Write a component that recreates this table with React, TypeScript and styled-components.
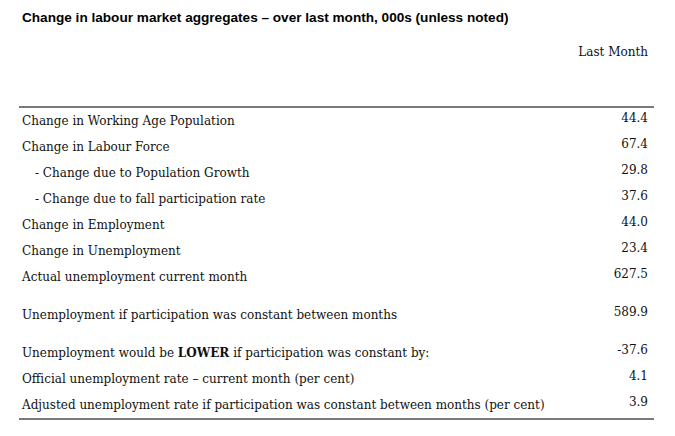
import React from "react";
import styled, { createGlobalStyle } from "styled-components";

const Global = createGlobalStyle`
  html, body { margin: 0; padding: 0; background: #ffffff; }
  body { width: 675px; height: 436px; overflow: hidden; }
`;

const Page = styled.div`
  padding: 10px 0 0 19px;
  width: 635px;
  color: #111;
`;

const Title = styled.h1`
  margin: 0 0 0 3px;
  font-family: "Liberation Sans", Arial, sans-serif;
  font-weight: bold;
  font-size: 13.6px;
  line-height: 16px;
  color: #000;
`;

const HeaderRow = styled.div`
  display: flex;
  justify-content: flex-end;
  padding: 18px 6px 0 0;
  height: 80px;
  box-sizing: border-box;
  font-family: "DejaVu Serif", Cambria, serif;
  font-size: 12px;
  line-height: 16px;
`;

const Table = styled.div`
  border-top: 2px solid #7a7a7a;
  border-bottom: 2px solid #7a7a7a;
  display: flex;
  flex-direction: column;
  font-family: "DejaVu Serif", Cambria, serif;
  font-size: 12px;
`;

const Row = styled.div<{ $gap?: boolean }>`
  display: flex;
  align-items: center;
  justify-content: space-between;
  height: 26px;
  margin-top: ${(p) => (p.$gap ? "12px" : "0")};
  padding: 0 6px 0 3px;
`;

const Label = styled.span<{ $indent?: boolean }>`
  padding-left: ${(p) => (p.$indent ? "13px" : "0")};
  white-space: nowrap;
`;

const Value = styled.span`
  padding-bottom: 7px;
`;

const rows: { label: React.ReactNode; value: string; indent?: boolean; gap?: boolean }[] = [
  { label: "Change in Working Age Population", value: "44.4" },
  { label: "Change in Labour Force", value: "67.4" },
  { label: "- Change due to Population Growth", value: "29.8", indent: true },
  { label: "- Change due to fall participation rate", value: "37.6", indent: true },
  { label: "Change in Employment", value: "44.0" },
  { label: "Change in Unemployment", value: "23.4" },
  { label: "Actual unemployment current month", value: "627.5" },
  { label: "Unemployment if participation was constant between months", value: "589.9", gap: true },
  {
    label: (
      <>
        Unemployment would be <b>LOWER</b> if participation was constant by:
      </>
    ),
    value: "-37.6",
    gap: true,
  },
  { label: "Official unemployment rate \u2013 current month (per cent)", value: "4.1" },
  {
    label: "Adjusted unemployment rate if participation was constant between months (per cent)",
    value: "3.9",
  },
];

export default function App() {
  return (
    <>
      <Global />
      <Page>
        <Title>Change in labour market aggregates – over last month, 000s (unless noted)</Title>
        <HeaderRow>Last Month</HeaderRow>
        <Table>
          {rows.map((r, i) => (
            <Row key={i} $gap={r.gap}>
              <Label $indent={r.indent}>{r.label}</Label>
              <Value>{r.value}</Value>
            </Row>
          ))}
        </Table>
      </Page>
    </>
  );
}
